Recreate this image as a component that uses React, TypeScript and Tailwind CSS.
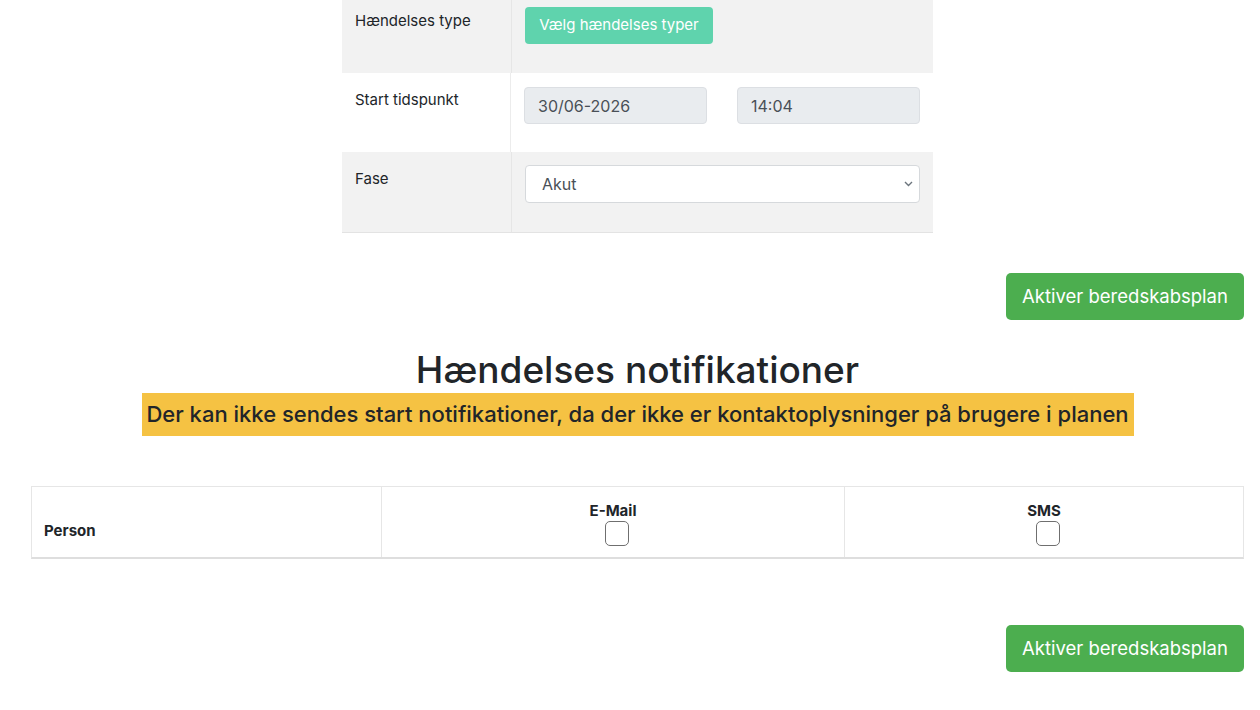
import React from 'react';

const font = { fontFamily: 'Inter, "Liberation Sans", Arial, sans-serif' };

function ActivateButton() {
  return (
    <div className="flex justify-end">
      <button className="h-[47px] w-[238px] rounded-[5px] bg-[#4cae4f] text-[18.5px] text-white">
        Aktiver beredskabsplan
      </button>
    </div>
  );
}

export default function App() {
  return (
    <div className="min-h-[710px] bg-white text-[#212529]" style={font}>
      <div className="pl-[31px] pr-[16px]">
        {/* event setup table */}
        <div className="mx-auto w-[591px] -mt-[6px] border-b border-[#e3e3e3]">
          <div className="flex h-[79px] bg-[#f2f2f2]">
            <div className="w-[170px] border-r border-[#e6e6e6] px-[13px] pt-[16px] text-[15px]">Hændelses type</div>
            <div className="flex-1 px-[13px] pt-[13px]">
              <button className="h-[37px] w-[188px] rounded-[4px] bg-[#5fd3ad] text-[15px] text-white">
                Vælg hændelses typer
              </button>
            </div>
          </div>
          <div className="flex h-[79px] bg-white">
            <div className="w-[170px] border-r border-[#ececec] px-[13px] pt-[16px] text-[15px]">Start tidspunkt</div>
            <div className="flex flex-1 gap-[30px] px-[13px] pt-[14px]">
              <div className="flex h-[37px] w-[183px] items-center rounded-[4px] border border-[#dcdfe3] bg-[#e9ecef] px-[13px] text-[16px] text-[#495057]">
                30/06-2026
              </div>
              <div className="flex h-[37px] w-[183px] items-center rounded-[4px] border border-[#dcdfe3] bg-[#e9ecef] px-[13px] text-[16px] text-[#495057]">
                14:04
              </div>
            </div>
          </div>
          <div className="flex h-[80px] bg-[#f2f2f2]">
            <div className="w-[170px] border-r border-[#e6e6e6] px-[13px] pt-[16px] text-[15px]">Fase</div>
            <div className="flex-1 px-[13px] pt-[13px]">
              <div className="flex h-[38px] items-center justify-between rounded-[4px] border border-[#d6d9dc] bg-white pl-[16px] pr-[6px] text-[16px] text-[#495057]">
                <span>Akut</span>
                <svg width="9" height="6" viewBox="0 0 9 6" fill="none" stroke="#6c757d" strokeWidth="1.4">
                  <path d="M1 1l3.5 3.5L8 1" />
                </svg>
              </div>
            </div>
          </div>
        </div>

        <div className="mt-[40px]">
          <ActivateButton />
        </div>

        <h2 className="mt-[27px] text-center text-[37px] font-medium leading-[46px] text-[#212529]">
          Hændelses notifikationer
        </h2>
        <div className="flex justify-center">
          <div className="flex h-[43px] w-[992px] items-center justify-center bg-[#f5c243] text-[22px] font-medium text-[#212529]">
            Der kan ikke sendes start notifikationer, da der ikke er kontaktoplysninger på brugere i planen
          </div>
        </div>

        {/* notification table */}
        <div className="mt-[50px] flex h-[73px] border-t border-l border-r border-[#e6e6e6] border-b-2 border-b-[#dedede]">
          <div className="flex w-[350px] items-end border-r border-[#e6e6e6] px-[12px] pb-[15px] text-[15px] font-bold">
            Person
          </div>
          <div className="flex w-[463px] flex-col items-center border-r border-[#e6e6e6] pt-[15px]">
            <span className="text-[15px] font-bold leading-[18px]">E-Mail</span>
            <div className="ml-[8px] mt-[1px] h-[25px] w-[24px] rounded-[5px] border-[1.5px] border-[#6f6f6f] bg-white" />
          </div>
          <div className="flex flex-1 flex-col items-center pt-[15px]">
            <span className="text-[15px] font-bold leading-[18px]">SMS</span>
            <div className="ml-[8px] mt-[1px] h-[25px] w-[24px] rounded-[5px] border-[1.5px] border-[#6f6f6f] bg-white" />
          </div>
        </div>

        <div className="mt-[66px]">
          <ActivateButton />
        </div>
      </div>
    </div>
  );
}
